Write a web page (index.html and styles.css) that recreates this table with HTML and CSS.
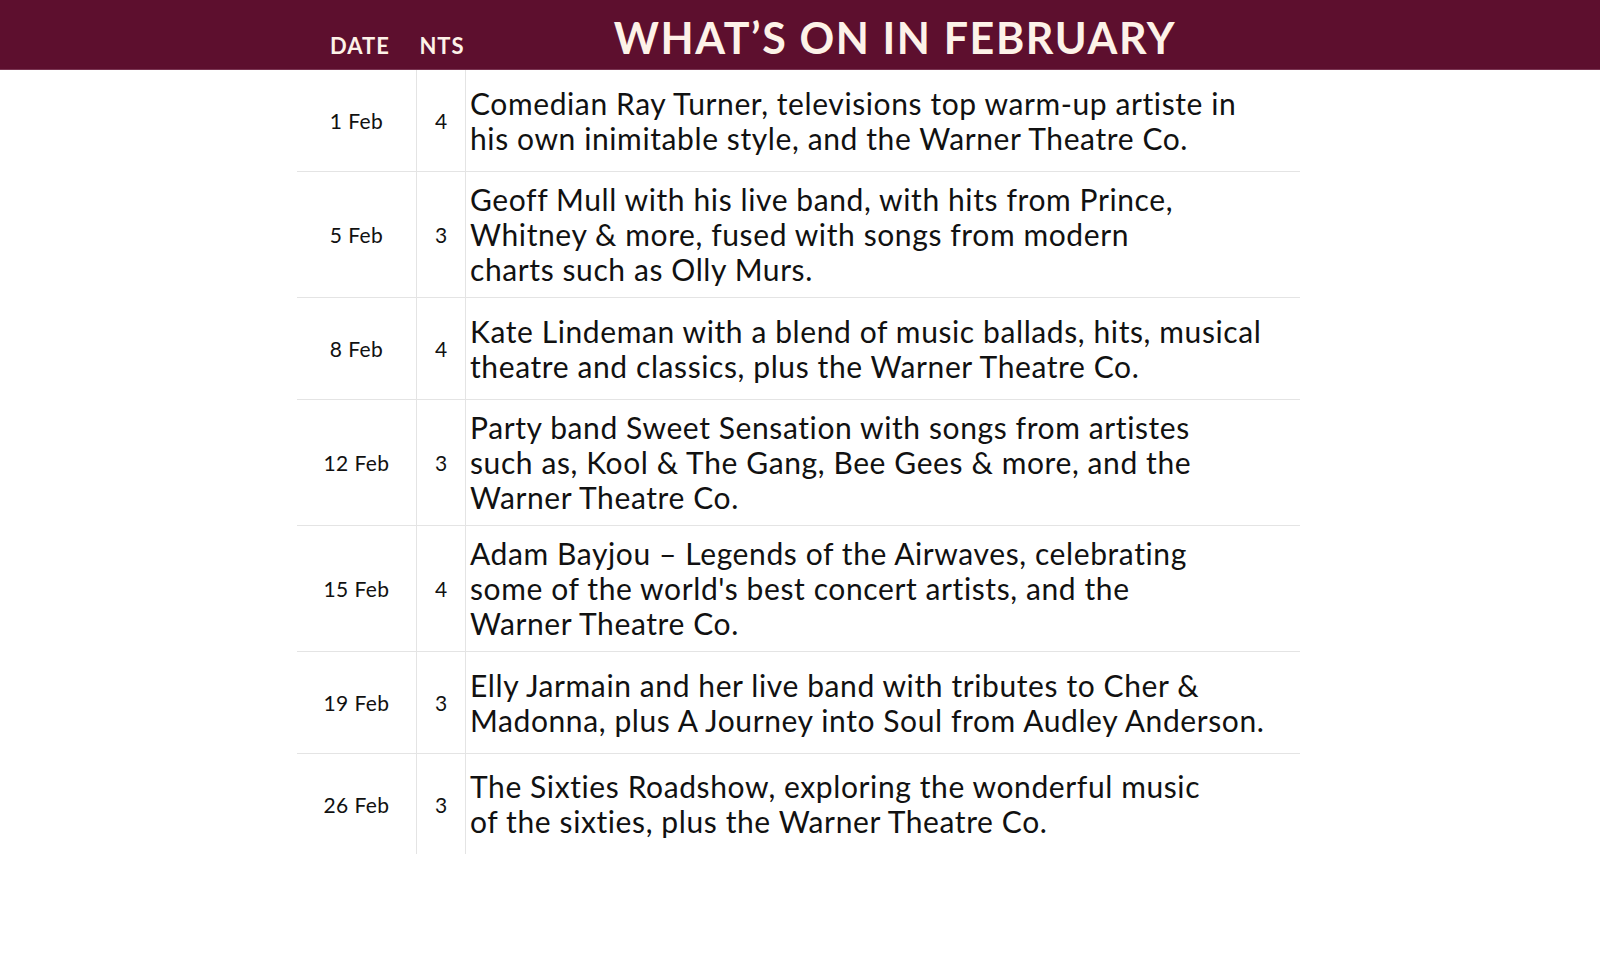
FILE: index.html
```html
<!DOCTYPE html>
<html lang="en">
<head>
<meta charset="utf-8">
<title>What's On in February</title>
<link rel="stylesheet" href="styles.css">
</head>
<body>
<header class="banner">
  <div class="banner-label banner-date">DATE</div>
  <div class="banner-label banner-nts">NTS</div>
  <h1 class="banner-title">WHAT’S ON IN FEBRUARY</h1>
</header>
<main class="listing">
  <div class="row">
    <div class="cell cell-date">1 Feb</div>
    <div class="cell cell-nts">4</div>
    <div class="cell cell-desc">Comedian Ray Turner, televisions top warm-up artiste in<br>his own inimitable style, and the Warner Theatre Co.</div>
  </div>
  <div class="row">
    <div class="cell cell-date">5 Feb</div>
    <div class="cell cell-nts">3</div>
    <div class="cell cell-desc">Geoff Mull with his live band, with hits from Prince,<br>Whitney &amp; more, fused with songs from modern<br>charts such as Olly Murs.</div>
  </div>
  <div class="row">
    <div class="cell cell-date">8 Feb</div>
    <div class="cell cell-nts">4</div>
    <div class="cell cell-desc">Kate Lindeman with a blend of music ballads, hits, musical<br>theatre and classics, plus the Warner Theatre Co.</div>
  </div>
  <div class="row">
    <div class="cell cell-date">12 Feb</div>
    <div class="cell cell-nts">3</div>
    <div class="cell cell-desc">Party band Sweet Sensation with songs from artistes<br>such as, Kool &amp; The Gang, Bee Gees &amp; more, and the<br>Warner Theatre Co.</div>
  </div>
  <div class="row">
    <div class="cell cell-date">15 Feb</div>
    <div class="cell cell-nts">4</div>
    <div class="cell cell-desc">Adam Bayjou – Legends of the Airwaves, celebrating<br>some of the world's best concert artists, and the<br>Warner Theatre Co.</div>
  </div>
  <div class="row">
    <div class="cell cell-date">19 Feb</div>
    <div class="cell cell-nts">3</div>
    <div class="cell cell-desc">Elly Jarmain and her live band with tributes to Cher &amp;<br>Madonna, plus A Journey into Soul from Audley Anderson.</div>
  </div>
  <div class="row row-last">
    <div class="cell cell-date">26 Feb</div>
    <div class="cell cell-nts">3</div>
    <div class="cell cell-desc">The Sixties Roadshow, exploring the wonderful music<br>of the sixties, plus the Warner Theatre Co.</div>
  </div>
</main>
</body>
</html>
```

FILE: styles.css
```css
html, body {
  margin: 0;
  padding: 0;
  background: #ffffff;
}

body {
  font-family: Lato, "Open Sans", "Liberation Sans", sans-serif;
  color: #111111;
  width: 1600px;
  height: 967px;
  overflow: hidden;
}

.banner {
  display: flex;
  align-items: baseline;
  height: 70px;
  box-sizing: border-box;
  padding: 16px 0 0 297px;
  background: #5d0f2e;
  color: #fdf2e8;
  border-bottom: 1px solid #7a3552;
}

.banner-label {
  font-weight: 700;
  font-size: 22px;
  line-height: 1;
  letter-spacing: 1px;
}

.banner-date {
  width: 120px;
  text-align: center;
  padding-left: 6px;
  box-sizing: border-box;
}

.banner-nts {
  width: 49px;
  text-align: center;
  padding-left: 1px;
  box-sizing: border-box;
}

.banner-title {
  margin: 0;
  width: 834px;
  box-sizing: border-box;
  padding-left: 24px;
  text-align: center;
  font-weight: 700;
  font-size: 43px;
  line-height: 1;
  letter-spacing: 1.6px;
}

.listing {
  margin-left: 297px;
  width: 1003px;
}

.row {
  display: flex;
  min-height: 101px;
  border-bottom: 1px solid #e4e4e4;
}

.row-last {
  border-bottom: none;
  min-height: 100px;
}

.cell {
  display: flex;
  align-items: center;
  box-sizing: border-box;
}

.cell-date {
  width: 120px;
  justify-content: center;
  border-right: 1px solid #e4e4e4;
  font-size: 21px;
  letter-spacing: 0.4px;
}

.cell-nts {
  width: 49px;
  justify-content: center;
  border-right: 1px solid #e4e4e4;
  font-size: 21px;
}

.cell-desc {
  display: block;
  align-self: center;
  width: 834px;
  padding: 10px 0 10px 4px;
  font-size: 30px;
  line-height: 35px;
  letter-spacing: 0.6px;
}
```
